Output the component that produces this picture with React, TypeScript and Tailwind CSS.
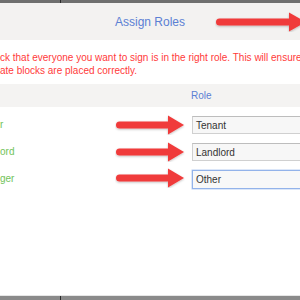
import React from "react";

function Arrow({ className, len, head }: { className: string; len: number; head: number }) {
  const h = 20;
  const total = len + head;
  return (
    <svg className={className} width={total} height={h} viewBox={`0 0 ${total} ${h}`}>
      <defs>
        <filter id="sh" x="-10%" y="-30%" width="120%" height="160%">
          <feDropShadow dx="0" dy="1" stdDeviation="0.8" floodColor="#000" floodOpacity="0.25" />
        </filter>
      </defs>
      <g filter="url(#sh)" fill="#f03a3a">
        <rect x="1" y="6.5" width={len + 2} height="7" rx="3.5" />
        <polygon points={`${len},0.5 ${total - 1},10 ${len},19.5`} />
      </g>
    </svg>
  );
}

export default function App() {
  const font = { fontFamily: '"Liberation Sans", Arial, sans-serif' };
  return (
    <div className="relative w-[300px] h-[300px] overflow-hidden bg-white flex flex-col" style={font}>
      <div className="h-[3px] bg-[#6f6f6f] relative shrink-0">
        <div className="absolute left-[60px] top-0 w-px h-[3px] bg-[#2a2a2a]" />
      </div>
      <div className="h-[37px] shrink-0 bg-[#f3f2f1] flex items-center justify-center">
        <span className="text-[12px] text-[#5b80d4] leading-none">Assign Roles</span>
      </div>
      <div className="h-[44px] shrink-0 pt-[11px] text-[10px] leading-[13px] text-[#ff3a3a] whitespace-nowrap">
        <div>ck that everyone you want to sign is in the right role. This will ensure</div>
        <div>ate blocks are placed correctly.</div>
      </div>
      <div className="h-[23px] shrink-0 bg-[#f4f3f2] flex items-center pl-[191px]">
        <span className="text-[10px] text-[#5b80d4] leading-none">Role</span>
      </div>
      <div className="flex flex-col gap-[9px] pt-[9px]">
        {[
          { label: "r", value: "Tenant", focus: false },
          { label: "ord", value: "Landlord", focus: false },
          { label: "ger", value: "Other", focus: true },
        ].map((r) => (
          <div key={r.value} className="h-[18px] flex items-center">
            <span className="w-[192px] shrink-0 text-[10px] text-[#72c35a] leading-none">{r.label}</span>
            <div
              className={
                r.focus
                  ? "w-[150px] shrink-0 h-[19px] border border-[#93b3ea] bg-[#f8f8f8] flex items-center pl-[3px] text-[10px] text-[#333] shadow-[0_0_0_0.5px_#b9cff3]"
                  : "w-[150px] shrink-0 h-[18px] border border-[#d0d0d0] border-t-[#bdbdbd] bg-[#f7f7f7] flex items-center pl-[3px] text-[10px] text-[#333]"
              }
            >
              {r.value}
            </div>
          </div>
        ))}
      </div>
      <div className="flex-1" />
      <div className="h-px bg-[#e6e6e6] shrink-0" />
      <div className="h-[4px] bg-[#8a8a8a] relative shrink-0">
        <div className="absolute left-[60px] top-0 w-px h-[4px] bg-[#2a2a2a]" />
      </div>

      <Arrow className="absolute left-[215px] top-[12px]" len={74} head={18} />
      <Arrow className="absolute left-[115px] top-[115px]" len={53} head={17} />
      <Arrow className="absolute left-[115px] top-[142px]" len={53} head={17} />
      <Arrow className="absolute left-[115px] top-[168px]" len={53} head={17} />
    </div>
  );
}
